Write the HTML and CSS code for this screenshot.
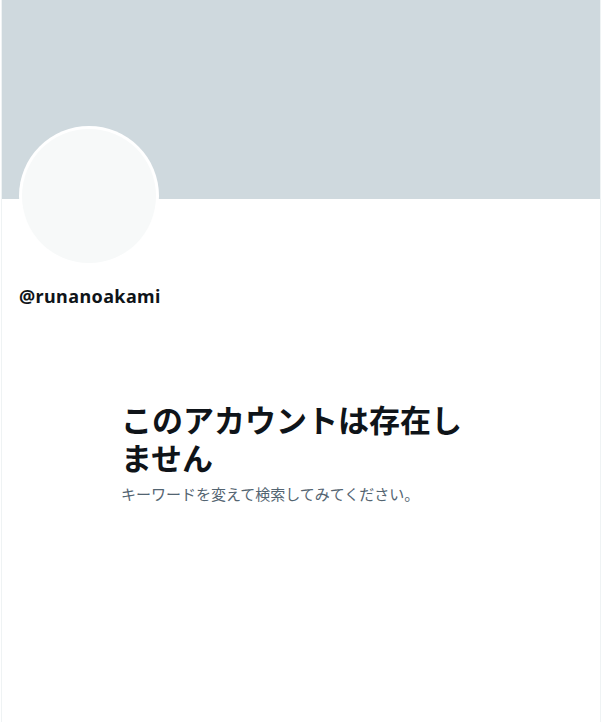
FILE: index.html
```html
<!DOCTYPE html>
<html lang="ja">
<head>
  <meta charset="UTF-8" />
  <meta name="viewport" content="width=device-width, initial-scale=1.0" />
  <title>@runanoakami</title>
  <link rel="stylesheet" href="styles.css">
</head>
<body>
  <main class="column">
    <div class="banner"></div>
    <div class="profile">
      <div class="avatar"><div class="avatar-inner"></div></div>
      <div class="handle">@runanoakami</div>
    </div>
    <div class="empty">
      <h1 class="empty-title">このアカウントは存在しません</h1>
      <p class="empty-text">キーワードを変えて検索してみてください。</p>
    </div>
  </main>
</body>
</html>
```

FILE: styles.css
```css
:root {
  --border-color: #eff3f4;
  --banner-bg: #cfd9de;
  --avatar-bg: #f7f9f9;
  --text-color: #0f1419;
  --muted-color: #536471;
}

html, body {
  margin: 0;
  padding: 0;
  background: #fff;
}

body {
  font-family: "Noto Sans", "Noto Sans CJK JP", sans-serif;
  color: var(--text-color);
}

.column {
  width: 598px;
  min-height: 722px;
  margin-left: 1px;
  border-left: 1px solid var(--border-color);
  border-right: 1px solid var(--border-color);
}

.banner {
  height: 199px;
  background-color: var(--banner-bg);
}

.profile {
  padding: 0 17px;
}

.avatar {
  width: 140px;
  height: 140px;
  margin-top: -73px;
  border-radius: 50%;
  background: #fff;
  padding: 3px;
  box-sizing: border-box;
}

.avatar-inner {
  width: 100%;
  height: 100%;
  border-radius: 50%;
  background: var(--avatar-bg);
}

.handle {
  margin-top: 18px;
  font-size: 18px;
  font-weight: 700;
  letter-spacing: 0.4px;
  line-height: 24px;
}

.empty {
  width: 360px;
  margin: 92px auto 0;
}

.empty-title {
  margin: 0;
  font-family: "Noto Sans CJK JP", sans-serif;
  font-size: 31px;
  font-weight: 700;
  line-height: 38px;
}

.empty-text {
  margin: 8px 0 0;
  font-family: "Noto Sans CJK JP", sans-serif;
  font-size: 15px;
  line-height: 20px;
  color: var(--muted-color);
}
```
